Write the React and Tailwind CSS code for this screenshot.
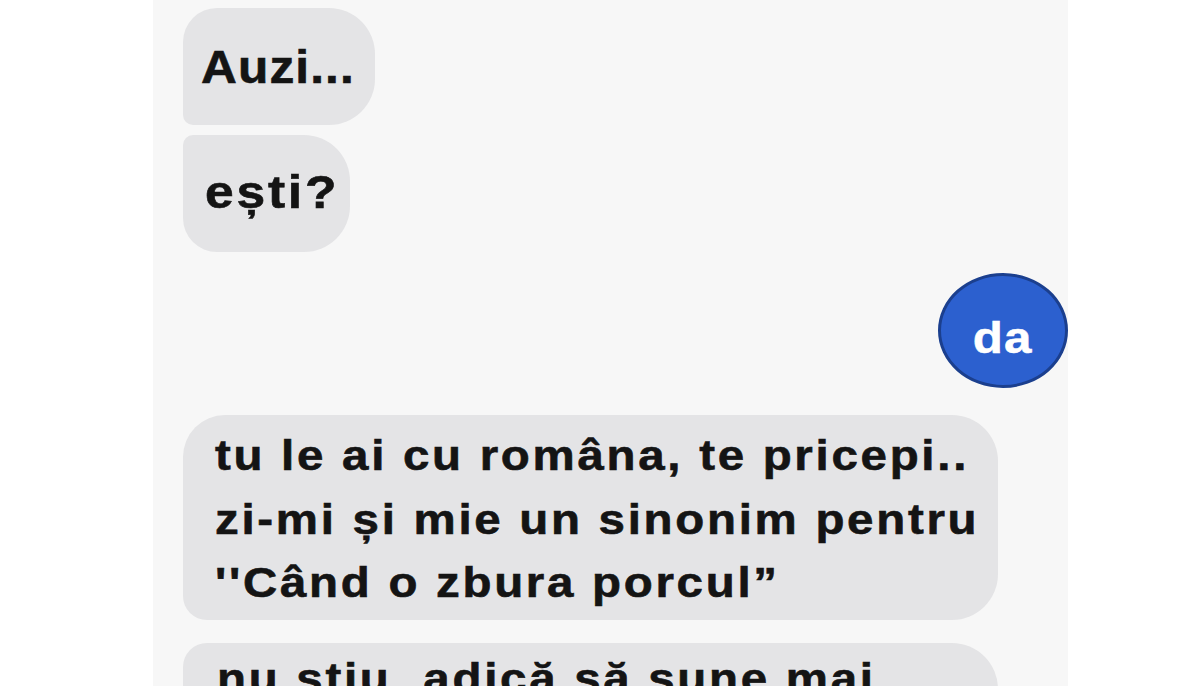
export default function App() {
  const font = { fontFamily: '"Liberation Sans", Arial, sans-serif' };
  const line =
    "block origin-left scale-x-[1.13] text-[42px] leading-[63.5px] font-bold tracking-[2.4px] text-[#141414] whitespace-nowrap [-webkit-text-stroke:0.6px_#141414]";
  return (
    <div className="w-[1200px] h-[686px] bg-white overflow-hidden flex" style={font}>
      <div className="ml-[153px] w-[915px] h-[686px] bg-[#f7f7f7] flex flex-col pl-[30px] pt-[8px] overflow-hidden">
        <div className="w-[192px] h-[117px] shrink-0 bg-[#e4e4e6] rounded-tl-[34px] rounded-bl-[10px] rounded-r-[46px] flex items-center pl-[18px]">
          <span className="block origin-left scale-x-[1.08] text-[46px] leading-none font-bold tracking-[1px] text-[#141414] [-webkit-text-stroke:0.6px_#141414]">Auzi...</span>
        </div>
        <div className="mt-[10px] w-[167px] h-[117px] shrink-0 bg-[#e4e4e6] rounded-tl-[10px] rounded-bl-[34px] rounded-r-[46px] flex items-center pl-[22px] pb-[4px]">
          <span className="block origin-left scale-x-[1.12] text-[46px] leading-none font-bold tracking-[2.5px] text-[#141414] [-webkit-text-stroke:0.6px_#141414]">ești?</span>
        </div>
        <div className="mt-[21px] self-end w-[130px] h-[115px] shrink-0 rounded-[50%] bg-[#2c60cf] border-[3px] border-[#1b3f8e] flex items-center justify-center pt-[14px]">
          <span className="block scale-x-[1.12] text-[44px] leading-none font-bold tracking-[1px] text-white [-webkit-text-stroke:0.5px_#ffffff]">da</span>
        </div>
        <div className="mt-[27px] w-[815px] h-[205px] shrink-0 bg-[#e4e4e6] rounded-tl-[42px] rounded-tr-[46px] rounded-br-[46px] rounded-bl-[24px] pl-[32px] pt-[9px]">
          <span className={line}>tu le ai cu româna, te pricepi..</span>
          <span className={line}>zi-mi și mie un sinonim pentru</span>
          <span className={line}>''Când o zbura porcul”</span>
        </div>
        <div className="mt-[23px] w-[815px] h-[120px] shrink-0 bg-[#e4e4e6] rounded-tl-[24px] rounded-tr-[46px] rounded-br-[46px] rounded-bl-[42px] pl-[34px] pt-[4px]">
          <span className={line}>nu știu, adică să sune mai</span>
        </div>
      </div>
    </div>
  );
}
